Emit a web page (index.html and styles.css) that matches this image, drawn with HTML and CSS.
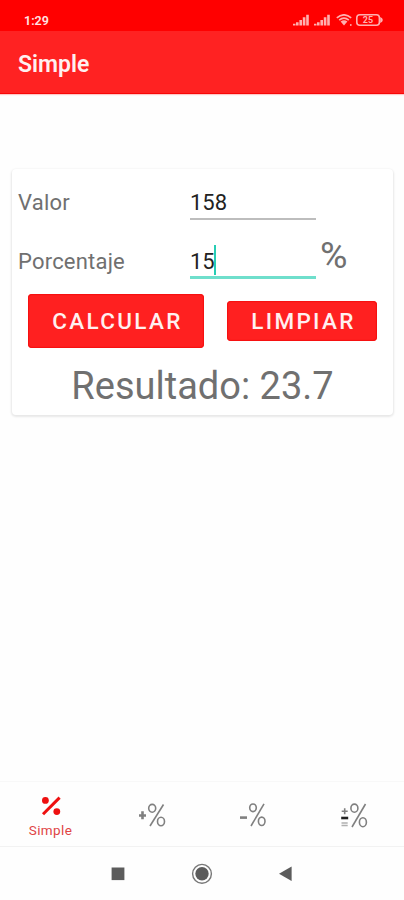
FILE: index.html
```html
<!DOCTYPE html>
<html lang="es">
<head>
    <meta charset="UTF-8">
    <meta name="viewport" content="width=device-width, initial-scale=1.0">
    <title>Simple</title>
    <link rel="stylesheet" href="styles.css">
</head>
<body>
    <div class="status-bar">
        <span class="time">1:29</span>
        <div class="status-icons">
            <svg class="signal" width="17" height="12" viewBox="0 0 17 12">
                <path d="M1.2 9.8v1.7M4.3 8.3v3.2M7.7 6v5.5M11.1 3.2v8.3M14.5 0.7v10.8" />
            </svg>
            <svg class="signal" width="17" height="12" viewBox="0 0 17 12">
                <path d="M1.2 9.8v1.7M4.3 8.3v3.2M7.7 6v5.5M11.1 3.2v8.3M14.5 0.7v10.8" />
            </svg>
            <svg class="wifi" width="16" height="12" viewBox="0 0 16 12">
                <path d="M0.8 3.8Q8 -2.2 15.2 3.8M3.2 6.2Q8 2 12.8 6.2" />
                <path class="fill" d="M4.6 7.6Q8 5 11.4 7.6L8 11.5z" />
                <circle class="fill" cx="14.8" cy="11" r="0.9" />
            </svg>
            <svg class="battery" width="27" height="12" viewBox="0 0 27 12">
                <rect x="0.8" y="0.8" width="22.6" height="10.4" rx="3" />
                <path class="fill" d="M24.2 3Q26.8 4 26.8 6T24.2 9z" />
                <text x="12" y="9.2" text-anchor="middle">25</text>
            </svg>
        </div>
    </div>

    <header class="app-bar">
        <h1>Simple</h1>
    </header>

    <main>
        <div class="card">
            <div class="row">
                <label for="valor">Valor</label>
                <div class="field" id="valor">158</div>
            </div>
            <div class="row row-percent">
                <label for="porcentaje">Porcentaje</label>
                <div class="field active" id="porcentaje">15<span class="cursor"></span></div>
                <span class="percent">%</span>
            </div>
            <div class="buttons">
                <button class="btn calculate">CALCULAR</button>
                <button class="btn clear">LIMPIAR</button>
            </div>
            <p class="result">Resultado: 23.7</p>
        </div>
    </main>

    <nav class="tabs">
        <a class="tab selected">
            <svg width="20" height="20" viewBox="0 0 20 20">
                <path d="M2 18.2L18.6 1.6" />
                <circle cx="4.4" cy="4.4" r="3.4" />
                <circle cx="15.8" cy="15.6" r="3.4" />
            </svg>
            <span>Simple</span>
        </a>
        <a class="tab">
            <svg width="28" height="26" viewBox="0 0 28 26">
                <path class="bold" d="M1 13.5h7M4.5 9.3v8" />
                <path d="M12 24L25.5 2.5" />
                <ellipse cx="14.2" cy="6.3" rx="3.5" ry="3.9" />
                <ellipse cx="23" cy="19.5" rx="3.5" ry="4.2" />
            </svg>
        </a>
        <a class="tab">
            <svg width="28" height="26" viewBox="0 0 28 26">
                <path class="bold" d="M1 15.6h7" />
                <path d="M12 24L25 1.8" />
                <ellipse cx="14" cy="5.8" rx="3.3" ry="3.8" />
                <ellipse cx="22.7" cy="19.3" rx="3.3" ry="4.2" />
            </svg>
        </a>
        <a class="tab">
            <svg width="28" height="26" viewBox="0 0 28 26">
                <path d="M1.7 9.3h6M4.7 6.3v6" />
                <path class="dark" d="M1.2 16h7" />
                <path class="pale" d="M1.5 21h6.2M1.5 23.5h6.2" />
                <path d="M12 25L25.5 2" />
                <ellipse cx="14.4" cy="6.2" rx="3.5" ry="4.1" />
                <ellipse cx="22.9" cy="20.2" rx="3.5" ry="4.5" />
            </svg>
        </a>
    </nav>

    <div class="nav-bar">
        <svg width="14" height="14" viewBox="0 0 14 14">
            <rect x="0.6" y="0.5" width="12.8" height="12.6" />
        </svg>
        <svg width="22" height="22" viewBox="0 0 22 22">
            <circle class="ring" cx="11" cy="10.8" r="9.4" />
            <circle cx="11" cy="10.8" r="6.7" />
        </svg>
        <svg width="14" height="16" viewBox="0 0 14 16">
            <path d="M0 7.8L12.6 0.5v14.6z" />
        </svg>
    </div>
</body>
</html>
```

FILE: styles.css
```css
* {
    margin: 0;
    padding: 0;
    box-sizing: border-box;
}

body {
    display: flex;
    flex-direction: column;
    height: 900px;
    font-family: Roboto, "Liberation Sans", sans-serif;
    background: #fefefe;
    color: #707070;
    overflow: hidden;
}

/* Android status bar */
.status-bar {
    display: flex;
    justify-content: space-between;
    height: 31px;
    padding: 14px 21px 0 24px;
    background: #ff0000;
    color: #ffe4e4;
}

.time {
    font-size: 12.5px;
    line-height: 13px;
    font-weight: 600;
}

.status-icons {
    display: flex;
    gap: 4px;
}

.status-icons svg {
    fill: none;
    stroke: #ffb0b0;
    stroke-width: 1.6;
}

.status-icons .signal {
    stroke-width: 2.6;
}

.status-icons .wifi {
    margin-left: 1px;
}

.status-icons .fill {
    fill: #ffb0b0;
    stroke: none;
}

.status-icons text {
    fill: #ffb0b0;
    stroke: none;
    font-size: 9px;
    font-weight: 700;
}

.app-bar {
    height: 63px;
    padding: 20px 18px 0;
    background: #ff2222;
    border-bottom: 1px solid #f80808;
    box-shadow: 0 1px 1px #ffc8c8;
}

.app-bar h1 {
    font-size: 23px;
    line-height: 28px;
    font-weight: 600;
    color: #fff0f0;
}

main {
    flex: 1;
    padding: 75px 11px 0 12px;
}

/* Calculator card */
.card {
    height: 246px;
    background: #fff;
    border-radius: 4px;
    box-shadow: 0 1px 2px 1px #e8e8e8;
}

.row {
    display: flex;
    height: 51px;
    padding: 0 6px;
}

.row label {
    width: 172px;
    padding-top: 21px;
    font-size: 22px;
    line-height: 26px;
    letter-spacing: 0.2px;
}

.field {
    display: flex;
    width: 126px;
    padding-top: 21px;
    border-bottom: 2px solid #bdbdbd;
    font-size: 22px;
    line-height: 26px;
    color: #222;
}

.row-percent {
    height: 59px;
}

.row-percent label,
.row-percent .field {
    padding-top: 29px;
}

.field.active {
    border-bottom: 3px solid #6fdfcc;
}

.cursor {
    width: 2px;
    height: 30px;
    margin: -4px 0 0 -1px;
    background: #26cdb4;
}

.percent {
    padding: 17px 0 0 4px;
    font-size: 37.5px;
    line-height: 37px;
    font-weight: 400;
}

.buttons {
    display: flex;
    align-items: center;
    gap: 23px;
    padding: 15px 16px 0;
}

.btn {
    border: none;
    border-radius: 4px;
    background: #ff2020;
    box-shadow: inset 0 0 1px 1px #f51010;
    font-family: inherit;
    font-size: 22.5px;
    font-weight: 500;
    letter-spacing: 2.35px;
    color: #fff0f0;
}

.calculate {
    width: 176px;
    height: 54px;
    padding-left: 3px;
}

.clear {
    width: 150px;
    height: 40px;
    padding-left: 3px;
}

.result {
    padding-top: 15px;
    text-align: center;
    font-size: 38px;
    line-height: 46px;
}

/* Bottom tabs */
.tabs {
    display: flex;
    height: 66px;
    border-top: 1px solid #f8f8f8;
    border-bottom: 1px solid #f2f2f2;
}

.tab {
    flex: 1;
    display: flex;
    flex-direction: column;
    align-items: center;
    padding-top: 20px;
}

.tab svg {
    fill: none;
    stroke: #808080;
    stroke-width: 1.6;
}

.tab .bold {
    stroke-width: 2.6;
}

.tab .dark {
    stroke: #222;
    stroke-width: 2.6;
}

.tab .pale {
    stroke: #b0b0b0;
}

.tab.selected {
    padding-top: 14px;
    font-size: 13.5px;
    line-height: 16px;
    letter-spacing: 0.4px;
    color: #e04444;
}

.tab.selected svg {
    stroke: #ee1010;
    stroke-width: 3;
}

.tab.selected circle {
    fill: #ee1010;
    stroke: none;
}

.tab.selected span {
    margin-top: 6px;
}

/* System navigation */
.nav-bar {
    display: flex;
    justify-content: center;
    align-items: center;
    gap: 66px;
    height: 53px;
}

.nav-bar svg {
    fill: #5c5c5c;
}

.nav-bar .ring {
    fill: none;
    stroke: #777;
    stroke-width: 1.4;
}
```
